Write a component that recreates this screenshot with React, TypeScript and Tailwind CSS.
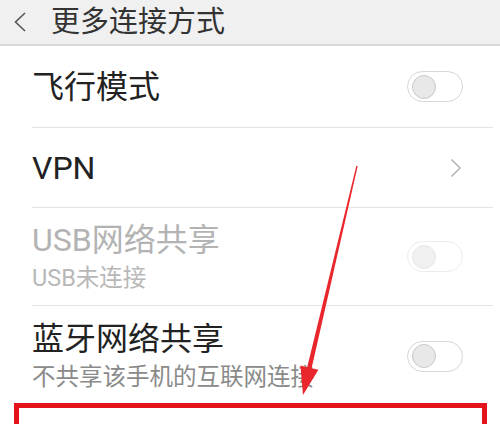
import React from "react"

const font = { fontFamily: 'Roboto, "Noto Sans CJK SC", sans-serif' }

function Toggle({ disabled }: { disabled?: boolean }) {
  return (
    <div
      className={`flex h-[31px] w-[56px] shrink-0 items-center rounded-full border-[1.5px] pl-[4px] ${
        disabled ? "border-[#ececec]" : "border-[#d6d6d6]"
      }`}
    >
      <div
        className={`h-[24px] w-[24px] rounded-full border ${
          disabled ? "border-[#e6e6e6] bg-[#f0f0f0]" : "border-[#c8c8c8] bg-[#e8e8e8]"
        }`}
      />
    </div>
  )
}

function Divider() {
  return <div className="ml-8 mr-[7px] h-px bg-[#e4e4e4]" />
}

export default function App() {
  return (
    <div className="relative h-[424px] w-[500px] overflow-hidden bg-white" style={font}>
      <header className="flex h-[46px] items-center border-b-2 border-[#d9d9d9] bg-[#f0f0f0]">
        <svg className="ml-[13px]" width="14" height="20" viewBox="0 0 14 20">
          <path d="M12 1 L2.5 10 L12 19" fill="none" stroke="#555" strokeWidth="1.6" />
        </svg>
        <h1 className="ml-[24px] text-[29px] leading-none text-[#333]">更多连接方式</h1>
      </header>

      <div className="flex h-[81px] items-center justify-between pl-8 pr-[37px]">
        <span className="text-[32px] leading-none text-[#222]">飞行模式</span>
        <Toggle />
      </div>
      <Divider />

      <div className="flex h-[79px] items-center justify-between pl-8 pr-[37px]">
        <span className="text-[32px] leading-none text-[#222]">VPN</span>
        <svg width="12" height="20" viewBox="0 0 12 20" className="mr-[1px]">
          <path d="M1.5 1.5 L10 10 L1.5 18.5" fill="none" stroke="#aaa" strokeWidth="1.3" />
        </svg>
      </div>
      <Divider />

      <div className="flex h-[97px] items-center justify-between pl-8 pr-[37px]">
        <div className="flex flex-col">
          <span className="text-[32px] leading-[38px] text-[#b3b3b3]">USB网络共享</span>
          <span className="mt-[4px] text-[23.5px] leading-[30px] text-[#b8b8b8]">USB未连接</span>
        </div>
        <Toggle disabled />
      </div>
      <Divider />

      <div className="flex h-[94px] items-center justify-between pl-8 pr-[37px] pt-[6px]">
        <div className="flex flex-col">
          <span className="text-[32px] leading-[38px] text-[#222]">蓝牙网络共享</span>
          <span className="mt-[4px] text-[23.5px] leading-[30px] text-[#8a8a8a]">不共享该手机的互联网连接</span>
        </div>
        <Toggle />
      </div>

      <div className="ml-[14px] mr-[13px] mt-[3px] h-[80px] border-[5px] border-[#e3121b] pl-[14px] pt-[14px]">
        <span className="text-[32px] leading-[38px] text-[#222]">个人热点</span>
      </div>

      <svg className="pointer-events-none absolute left-0 top-0" width="500" height="424" viewBox="0 0 500 424">
        <polygon
          points="356.3,165.9 357.7,166.1 311.6,368.2 318.4,369.8 303,395 300.4,365.6 307.2,367.2"
          fill="#e8262c"
        />
      </svg>
    </div>
  )
}
